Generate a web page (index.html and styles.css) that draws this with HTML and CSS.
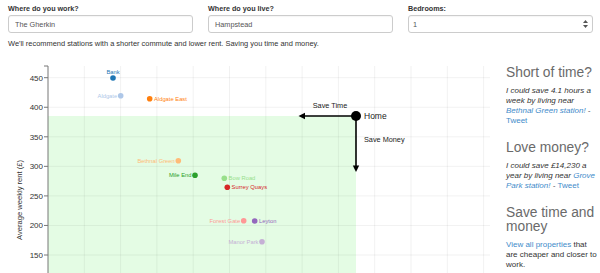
FILE: index.html
```html
<!DOCTYPE html>
<html lang="en">
<head>
    <meta charset="UTF-8">
    <meta name="viewport" content="width=device-width, initial-scale=1.0">
    <title>Commute and Rent</title>
    <link rel="stylesheet" href="styles.css">
</head>
<body>
    <div class="page">
        <div class="fields">
            <div class="field">
                <label for="work">Where do you work?</label>
                <input id="work" type="text" value="The Gherkin">
            </div>
            <div class="field">
                <label for="live">Where do you live?</label>
                <input id="live" type="text" value="Hampstead">
            </div>
            <div class="field">
                <label for="beds">Bedrooms:</label>
                <div class="select-wrap">
                    <select id="beds">
                        <option>1</option>
                        <option>2</option>
                        <option>3</option>
                    </select>
                    <svg class="select-arrows" width="5" height="8" viewBox="0 0 5 8">
                        <polygon points="2.5,0 5,3 0,3" fill="#555"/>
                        <polygon points="2.5,8 5,5 0,5" fill="#555"/>
                    </svg>
                </div>
            </div>
        </div>

        <p class="intro">We'll recommend stations with a shorter commute and lower rent. Saving you time and money.</p>

        <div class="main">
            <svg class="chart" width="490" height="213" viewBox="0 0 490 213">
                <!-- cheaper and closer area -->
                <rect class="zone" x="40" y="56" width="308" height="157"/>

                <g class="grid">
                    <line x1="76.3" y1="6" x2="76.3" y2="213"/>
                    <line x1="112.6" y1="6" x2="112.6" y2="213"/>
                    <line x1="148.9" y1="6" x2="148.9" y2="213"/>
                    <line x1="185.2" y1="6" x2="185.2" y2="213"/>
                    <line x1="221.5" y1="6" x2="221.5" y2="213"/>
                    <line x1="257.8" y1="6" x2="257.8" y2="213"/>
                    <line x1="294.1" y1="6" x2="294.1" y2="213"/>
                    <line x1="330.4" y1="6" x2="330.4" y2="213"/>
                    <line x1="366.7" y1="6" x2="366.7" y2="213"/>
                    <line x1="403" y1="6" x2="403" y2="213"/>
                    <line x1="439.3" y1="6" x2="439.3" y2="213"/>
                    <line x1="475.6" y1="6" x2="475.6" y2="213"/>
                    <line x1="40" y1="17.7" x2="482" y2="17.7"/>
                    <line x1="40" y1="47.25" x2="482" y2="47.25"/>
                    <line x1="40" y1="76.8" x2="482" y2="76.8"/>
                    <line x1="40" y1="106.35" x2="482" y2="106.35"/>
                    <line x1="40" y1="135.9" x2="482" y2="135.9"/>
                    <line x1="40" y1="165.45" x2="482" y2="165.45"/>
                    <line x1="40" y1="195" x2="482" y2="195"/>
                </g>

                <g class="axis">
                    <path d="M36,6 H40 V213"/>
                    <line x1="36" y1="17.7" x2="40" y2="17.7"/>
                    <line x1="36" y1="47.25" x2="40" y2="47.25"/>
                    <line x1="36" y1="76.8" x2="40" y2="76.8"/>
                    <line x1="36" y1="106.35" x2="40" y2="106.35"/>
                    <line x1="36" y1="135.9" x2="40" y2="135.9"/>
                    <line x1="36" y1="165.45" x2="40" y2="165.45"/>
                    <line x1="36" y1="195" x2="40" y2="195"/>
                    <text x="35" y="20.5">450</text>
                    <text x="35" y="50">400</text>
                    <text x="35" y="79.6">350</text>
                    <text x="35" y="109.1">300</text>
                    <text x="35" y="138.7">250</text>
                    <text x="35" y="168.2">200</text>
                    <text x="35" y="197.8">150</text>
                    <text class="axis-title" transform="translate(11,140) rotate(-90)">Average weekly rent (£)</text>
                </g>

                <g class="stations">
                    <circle cx="105" cy="18" r="2.8" fill="#1f77b4"/>
                    <text x="105" y="13.6" fill="#1f77b4" text-anchor="middle">Bank</text>
                    <circle cx="112.7" cy="35.7" r="2.8" fill="#aec7e8"/>
                    <text x="109.2" y="37.7" fill="#aec7e8" text-anchor="end">Aldgate</text>
                    <circle cx="141.7" cy="38.7" r="2.8" fill="#ff7f0e"/>
                    <text x="146" y="40.7" fill="#ff7f0e">Aldgate East</text>
                    <circle cx="170.3" cy="100.7" r="2.8" fill="#ffbb78"/>
                    <text x="166.8" y="102.7" fill="#ffbb78" text-anchor="end">Bethnal Green</text>
                    <circle cx="187" cy="115.3" r="2.8" fill="#2ca02c"/>
                    <text x="183.5" y="117.3" fill="#2ca02c" text-anchor="end">Mile End</text>
                    <circle cx="216.3" cy="118.3" r="2.8" fill="#98df8a"/>
                    <text x="220.6" y="120.3" fill="#98df8a">Bow Road</text>
                    <circle cx="219.3" cy="127.3" r="2.8" fill="#d62728"/>
                    <text x="223.6" y="129.3" fill="#d62728">Surrey Quays</text>
                    <circle cx="235.7" cy="160.7" r="2.8" fill="#ff9896"/>
                    <text x="232.2" y="162.7" fill="#ff9896" text-anchor="end">Forest Gate</text>
                    <circle cx="246.7" cy="161" r="2.8" fill="#9467bd"/>
                    <text x="251" y="163" fill="#9467bd">Leyton</text>
                    <circle cx="254" cy="181.7" r="2.8" fill="#c5b0d5"/>
                    <text x="250.5" y="183.7" fill="#c5b0d5" text-anchor="end">Manor Park</text>
                </g>

                <g class="home">
                    <line x1="348" y1="56" x2="296" y2="56"/>
                    <polygon points="290.5,56 297,52.8 297,59.2"/>
                    <line x1="348" y1="56" x2="348" y2="106"/>
                    <polygon points="348,112 344.8,105.5 351.2,105.5"/>
                    <circle cx="348" cy="56" r="5"/>
                    <text class="home-label" x="356" y="59">Home</text>
                    <text class="note" x="322" y="47.6" text-anchor="middle">Save Time</text>
                    <text class="note" x="356" y="82">Save Money</text>
                </g>
            </svg>

            <div class="sidebar">
                <h3>Short of time?</h3>
                <p class="quote">I could save 4.1 hours a week by living near <a href="#">Bethnal Green station!</a> - <a href="#" class="tweet">Tweet</a></p>

                <h3>Love money?</h3>
                <p class="quote">I could save £14,230 a year by living near <a href="#">Grove Park station!</a> - <a href="#" class="tweet">Tweet</a></p>

                <h3>Save time and money</h3>
                <p><a href="#">View all properties</a> that are cheaper and closer to work.</p>
            </div>
        </div>
    </div>
</body>
</html>
```

FILE: styles.css
```css
body {
    margin: 0;
    font-family: 'Liberation Sans', Arial, sans-serif;
    color: #333;
    background: #fff;
    overflow: hidden;
}

.page {
    padding: 4px 0 0 8px;
}

.fields {
    display: grid;
    grid-template-columns: repeat(3, 1fr);
    column-gap: 15px;
    width: 585px;
}

.field label {
    display: block;
    font-size: 7.2px;
    font-weight: bold;
    line-height: 10px;
    margin-bottom: 1px;
}

.field input,
.field select {
    display: block;
    width: 100%;
    height: 18px;
    box-sizing: border-box;
    border: 1px solid #ccc;
    border-radius: 3px;
    padding: 0 6px;
    font-family: inherit;
    font-size: 7.3px;
    color: #555;
    background: #fff;
    box-shadow: inset 0 1px 1px rgba(0, 0, 0, 0.04);
}

.field select {
    -webkit-appearance: none;
    appearance: none;
    padding-left: 4px;
}

.select-wrap {
    position: relative;
}

.select-arrows {
    position: absolute;
    right: 5px;
    top: 5px;
}

.intro {
    margin: 6px 0 0;
    font-size: 7.45px;
    line-height: 10px;
}

.main {
    display: flex;
    margin-top: 11px;
}

.chart {
    display: block;
    flex: none;
}

.zone {
    fill: #e4fce4;
}

.grid line {
    stroke: rgba(0, 0, 0, 0.055);
    stroke-width: 1;
}

.axis path,
.axis line {
    fill: none;
    stroke: #777;
    stroke-width: 1;
}

.axis text {
    font-size: 8px;
    fill: #333;
    text-anchor: end;
}

.axis .axis-title {
    font-size: 7.6px;
    text-anchor: middle;
    dominant-baseline: central;
}

.stations text {
    font-size: 5.8px;
}

.home line {
    stroke: #000;
    stroke-width: 1.6;
}

.home polygon,
.home circle {
    fill: #000;
}

.home text {
    fill: #222;
}

.home .home-label {
    font-size: 8.5px;
}

.home .note {
    font-size: 7.3px;
}

.sidebar {
    flex: none;
    width: 94px;
    margin-left: 8px;
    padding-top: 6px;
}

.sidebar h3 {
    margin: 0 0 6px;
    font-size: 13.8px;
    font-weight: normal;
    line-height: 14px;
    color: #6a6a6a;
}

.sidebar p {
    margin: 0 0 15px;
    font-size: 8px;
    line-height: 10px;
}

.sidebar .quote {
    font-style: italic;
}

.sidebar a {
    color: #428bca;
    text-decoration: none;
}

.sidebar .tweet {
    font-style: normal;
}
```
